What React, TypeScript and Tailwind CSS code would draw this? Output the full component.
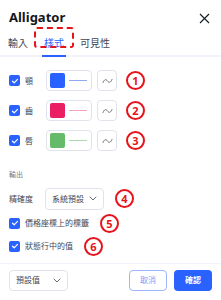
import React from 'react'

const font = { fontFamily: '"Noto Sans", "Noto Sans CJK TC", sans-serif' }

const Check = () => (
  <span className="flex h-[11px] w-[11px] shrink-0 items-center justify-center rounded-[2px] bg-[#2962ff]">
    <svg width="8" height="8" viewBox="0 0 8 8" fill="none">
      <path d="M1.5 4.2 3.2 5.8 6.5 2.4" stroke="#fff" strokeWidth="1.2" strokeLinecap="round" strokeLinejoin="round" />
    </svg>
  </span>
)

const Badge = ({ n }: { n: string }) => (
  <span className="flex h-[19px] w-[19px] shrink-0 items-center justify-center rounded-full border-2 border-[#e8131a] text-[11px] leading-none font-bold text-[#e8131a]">
    {n}
  </span>
)

const Chevron = () => (
  <svg width="8" height="5" viewBox="0 0 8 5" fill="none">
    <path d="M1 1l3 3 3-3" stroke="#6a6d78" strokeWidth="1" strokeLinecap="round" strokeLinejoin="round" />
  </svg>
)

const lines = [
  { label: '顎', color: '#2962ff', line: '#8fa9f5', n: '1' },
  { label: '齒', color: '#e91e63', line: '#f5a3bd', n: '2' },
  { label: '唇', color: '#66bb6a', line: '#a8dcaa', n: '3' },
]

export default function App() {
  return (
    <div className="flex h-[300px] w-[221px] flex-col bg-white text-[#131722]" style={font}>
      <div className="flex h-[34px] items-center justify-between pr-[11px] pl-[9px] pt-[2px]">
        <span className="text-[13px] font-bold">Alligator</span>
        <svg width="11" height="11" viewBox="0 0 11 11" fill="none">
          <path d="M1 1l9 9M10 1l-9 9" stroke="#131722" strokeWidth="1.1" />
        </svg>
      </div>

      <div className="flex h-[23px] items-end gap-[13px] border-b-2 border-[#f0f3fa] pl-[8px] text-[10px]">
        <span className="pb-[4px] text-[#434651]">輸入</span>
        <span className="relative px-[3px] pb-[4px] text-[#2962ff]">
          樣式
          <span className="absolute right-[-7px] left-[-7px] top-[-9px] h-[21px] rounded-[3px] border-2 border-dashed border-[#e8131a]" />
          <span className="absolute right-[1px] bottom-[-2px] left-[1px] h-[2px] bg-[#2962ff]" />
        </span>
        <span className="pb-[4px] text-[#434651]">可見性</span>
      </div>

      <div className="flex flex-col gap-[9px] px-[9px] pt-[13px]">
        {lines.map((l) => (
          <div key={l.n} className="flex h-[21px] items-center">
            <Check />
            <span className="ml-[5px] w-[21px] text-[8px] text-[#434651]">{l.label}</span>
            <div className="flex h-[21px] w-[46px] items-center rounded-[4px] border border-[#e0e3eb] pl-[3px]">
              <span className="h-[15px] w-[15px] rounded-[2px]" style={{ backgroundColor: l.color }} />
              <span className="ml-[4px] h-[1px] w-[18px]" style={{ backgroundColor: l.line }} />
            </div>
            <div className="ml-[5px] flex h-[21px] w-[20px] items-center justify-center rounded-[4px] border border-[#e0e3eb]">
              <svg width="11" height="6" viewBox="0 0 11 6" fill="none">
                <path d="M1 4.5C2.5 1 4 1 5.5 3S8.5 5 10 1.5" stroke="#6a6d78" strokeWidth="1" strokeLinecap="round" />
              </svg>
            </div>
            <span className="ml-[9px]">
              <Badge n={l.n} />
            </span>
          </div>
        ))}
      </div>

      <div className="px-[9px] pt-[19px] text-[7px] text-[#787b86]">輸出</div>

      <div className="flex items-center px-[9px] pt-[7px]">
        <span className="w-[36px] text-[8px] text-[#434651]">精確度</span>
        <div className="flex h-[22px] w-[59px] items-center justify-between rounded-[4px] border border-[#e0e3eb] pr-[6px] pl-[6px] text-[8px] text-[#434651]">
          系統預設
          <Chevron />
        </div>
        <span className="ml-[11px]">
          <Badge n="4" />
        </span>
      </div>

      <div className="flex items-center px-[9px] pt-[4px]">
        <Check />
        <span className="ml-[5px] text-[8px] text-[#434651]">價格座標上的標籤</span>
        <span className="ml-[11px]">
          <Badge n="5" />
        </span>
      </div>

      <div className="flex items-center px-[9px] pt-[4px]">
        <Check />
        <span className="ml-[5px] text-[8px] text-[#434651]">狀態行中的值</span>
        <span className="ml-[11px]">
          <Badge n="6" />
        </span>
      </div>

      <div className="mt-auto flex h-[37px] items-center justify-between border-t border-[#f0f3fa] px-[9px] pb-[4px]">
        <div className="flex h-[21px] w-[59px] items-center justify-between rounded-[4px] border border-[#e0e3eb] px-[6px] text-[8px] text-[#434651]">
          預設值
          <Chevron />
        </div>
        <div className="flex gap-[7px]">
          <button className="h-[21px] w-[38px] rounded-[4px] border border-[#9db5fb] text-[8px] text-[#7d9cf7]">取消</button>
          <button className="h-[21px] w-[38px] rounded-[4px] bg-[#2962ff] text-[8px] font-bold text-white">確認</button>
        </div>
      </div>
    </div>
  )
}
